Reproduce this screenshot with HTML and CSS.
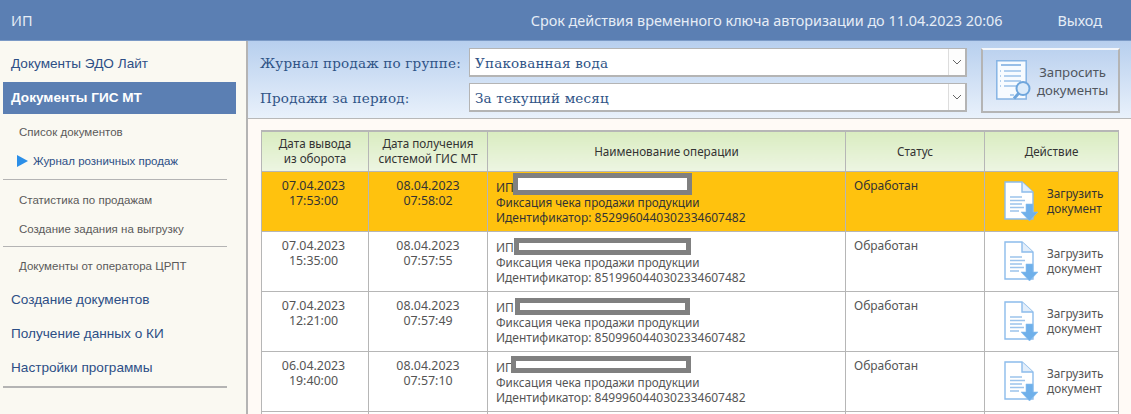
FILE: index.html
```html
<!DOCTYPE html>
<html lang="ru">
<head>
<meta charset="utf-8">
<title>Журнал розничных продаж</title>
<link rel="stylesheet" href="styles.css">
</head>
<body>
<svg class="defs" width="0" height="0" aria-hidden="true">
  <symbol id="doc-down" viewBox="0 0 34 40">
    <path d="M1 1H18L29 11V38H1Z" fill="#fff" stroke="#8cbcec" stroke-width="1.4"/>
    <path d="M18 1V11H29" fill="#e3eefa" stroke="#8cbcec" stroke-width="1.4"/>
    <path d="M6 16H18M6 19.500H21M6 23H18M6 26.500H20M6 30H15" stroke="#9cc4ec" stroke-width="1.3" fill="none"/>
    <path d="M22 23H29V31H34L25.500 40L17 31H22Z" fill="#6fb0ea" stroke="#8cc0f0" stroke-width=".6"/>
  </symbol>
</svg>
<header class="topbar">
  <span class="org">ИП</span>
  <span class="key">Срок действия временного ключа авторизации до 11.04.2023 20:06</span>
  <span class="exit">Выход</span>
</header>
<div class="body">
  <nav class="side">
    <a class="m first">Документы ЭДО Лайт</a>
    <a class="m active">Документы ГИС МТ</a>
    <a class="s s-list">Список документов</a>
    <a class="s current"><i class="arrow"></i>Журнал розничных продаж</a>
    <hr class="rule rule-a">
    <a class="s s-stat">Статистика по продажам</a>
    <a class="s s-task">Создание задания на выгрузку</a>
    <hr class="rule rule-b">
    <a class="s s-op">Документы от оператора ЦРПТ</a>
    <a class="m m-create">Создание документов</a>
    <a class="m m-get">Получение данных о КИ</a>
    <a class="m m-set">Настройки программы</a>
    <hr class="rule rule-c">
  </nav>
  <main class="main">
    <section class="filters">
      <div class="fields">
        <div class="field">
          <label class="lab">Журнал продаж по группе:</label>
          <div class="select"><span class="val">Упакованная вода</span><span class="drop"><svg width="10" height="6" viewBox="0 0 10 6"><path d="M1 1L5 5L9 1" fill="none" stroke="#666" stroke-width="1"/></svg></span></div>
        </div>
        <div class="field">
          <label class="lab">Продажи за период:</label>
          <div class="select"><span class="val">За текущий месяц</span><span class="drop"><svg width="10" height="6" viewBox="0 0 10 6"><path d="M1 1L5 5L9 1" fill="none" stroke="#666" stroke-width="1"/></svg></span></div>
        </div>
      </div>
      <button class="req">
        <svg class="req-ic" width="36" height="41" viewBox="0 0 36 41">
          <path d="M.8 .8H30.200V39H.8Z" fill="#f7fbff" stroke="#86b4e4" stroke-width="1.5"/>
          <path d="M5 5H25" stroke="#7fb0e2" stroke-width="1.600"/>
          <path d="M8 11H25M8 16H25M8 21H25M8 26H22M14 35H18" stroke="#9cc2ea" stroke-width="1.300"/>
          <path d="M4 11H5M4 16H5M4 21H5M4 26H5" stroke="#9cc2ea" stroke-width="1.300"/>
          <circle cx="27" cy="28.500" r="6.500" fill="#dcebfa" stroke="#6fa6dc" stroke-width="2"/>
          <path d="M22.500 33.500L18 38.500" stroke="#6fa6dc" stroke-width="3"/>
        </svg>
        <span class="req-t">Запросить<br>документы</span>
      </button>
    </section>
    <div class="content">
      <table class="tbl">
        <colgroup><col class="c1"><col class="c2"><col class="c3"><col class="c4"><col class="c5"></colgroup>
        <thead>
          <tr><th>Дата вывода<br>из оборота</th><th>Дата получения<br>системой ГИС МТ</th><th>Наименование операции</th><th>Статус</th><th>Действие</th></tr>
        </thead>
        <tbody>
          <tr class="sel">
            <td class="dt">07.04.2023<br>17:53:00</td><td class="dt">08.04.2023<br>07:58:02</td>
            <td class="op"><div class="ip">ИП<span class="red r1"></span></div><span class="fx">Фиксация чека продажи продукции</span><br>Идентификатор: 8529960440302334607482</td>
            <td class="st">Обработан</td>
            <td class="act"><div class="load"><svg class="dl" width="34" height="40"><use href="#doc-down"/></svg><span>Загрузить<br>документ</span></div></td>
          </tr>
          <tr>
            <td class="dt">07.04.2023<br>15:35:00</td><td class="dt">08.04.2023<br>07:57:55</td>
            <td class="op"><div class="ip">ИП<span class="red r2"></span></div><span class="fx">Фиксация чека продажи продукции</span><br>Идентификатор: 8519960440302334607482</td>
            <td class="st">Обработан</td>
            <td class="act"><div class="load"><svg class="dl" width="34" height="40"><use href="#doc-down"/></svg><span>Загрузить<br>документ</span></div></td>
          </tr>
          <tr>
            <td class="dt">07.04.2023<br>12:21:00</td><td class="dt">08.04.2023<br>07:57:49</td>
            <td class="op"><div class="ip">ИП<span class="red r3"></span></div><span class="fx">Фиксация чека продажи продукции</span><br>Идентификатор: 8509960440302334607482</td>
            <td class="st">Обработан</td>
            <td class="act"><div class="load"><svg class="dl" width="34" height="40"><use href="#doc-down"/></svg><span>Загрузить<br>документ</span></div></td>
          </tr>
          <tr>
            <td class="dt">06.04.2023<br>19:40:00</td><td class="dt">08.04.2023<br>07:57:10</td>
            <td class="op"><div class="ip">ИП<span class="red r4"></span></div><span class="fx">Фиксация чека продажи продукции</span><br>Идентификатор: 8499960440302334607482</td>
            <td class="st">Обработан</td>
            <td class="act"><div class="load"><svg class="dl" width="34" height="40"><use href="#doc-down"/></svg><span>Загрузить<br>документ</span></div></td>
          </tr>
          <tr class="tail"><td></td><td></td><td></td><td></td><td></td></tr>
        </tbody>
      </table>
    </div>
  </main>
</div>
</body>
</html>
```

FILE: styles.css
```css
* { box-sizing: border-box; }
html, body { margin: 0; height: 414px; overflow: hidden; }
body { font-family: "Noto Sans", sans-serif; background: #fffaf6; color: #444; }
.defs { position: absolute; }

.topbar {
  height: 41px; display: flex; align-items: center;
  background: #5b7fb3; color: #e6edf6;
  font-size: 14.400px;
  padding: 0 29px 0 11px;
  border-bottom: 1px solid #7b9ac6;
}
.key { margin-left: auto; }
.exit { margin-left: 55px; }

.body { display: flex; height: 373px; }

.side {
  width: 248px; flex: none; height: 100%;
  background: #faf9f2; border-right: 2px solid #b4b4b4;
  padding: 0 0 0 3px;
  display: flex; flex-direction: column;
  font-family: "Liberation Sans", sans-serif;
}
.side a { display: block; }
.m { font-size: 13.600px; color: #2d4f86; padding-left: 8px; height: 20px; line-height: 20px; }
.first { margin-top: 13px; }
.active {
  margin-top: 8px; height: 32px; width: 233px; line-height: 32px;
  background: #5b7fb3; color: #fff; font-weight: bold;
}
.s { font-size: 11.500px; color: #5a5a5a; padding-left: 16px; height: 16px; line-height: 16px; }
.s-list { margin-top: 10px; }
.current { margin-top: 13px; color: #2d4f86; display: flex !important; align-items: center; padding-left: 14px; }
.arrow {
  width: 0; height: 0; margin-right: 5px;
  border-left: 11px solid #2b8fe8; border-top: 6px solid transparent; border-bottom: 6px solid transparent;
}
.rule { border: 0; height: 1px; width: 224px; margin: 0; background: #b4b4b4; }
.rule-a { margin-top: 10px; }
.s-stat { margin-top: 12px; }
.s-task { margin-top: 13px; }
.rule-b { margin-top: 9px; }
.s-op { margin-top: 11px; }
.m-create { margin-top: 16px; }
.m-get { margin-top: 14px; }
.m-set { margin-top: 14px; }
.rule-c { margin-top: 8px; height: 2px; }

.main { flex: 1; display: flex; flex-direction: column; min-width: 0; }

.filters {
  height: 78px; flex: none; display: flex;
  padding: 7px 0 0 12px;
  background: linear-gradient(#b7cfee, #e9f1fb);
  border-bottom: 1px solid #b8b8b8;
}
.fields { display: flex; flex-direction: column; gap: 6px; width: 707px; }
.field { display: flex; align-items: center; height: 29px; }
.lab {
  width: 209px; flex: none; font-family: "DejaVu Serif", serif; font-size: 13.500px; color: #2f5386;
  white-space: nowrap; letter-spacing: .2px;
}
.select {
  flex: 1; height: 29px; display: flex; background: #fff;
  border: 2px solid #b4b4b4; border-width: 1px 2px 2px 1px;
}
.val { flex: 1; padding-left: 5px; line-height: 29px; font-family: "DejaVu Serif", serif; font-size: 13.500px; color: #2f5386; letter-spacing: .2px; }
.drop { width: 17px; display: flex; align-items: center; justify-content: center; background: #fdfdfd; border-left: 1px solid #ddd; }

.req {
  margin-left: 14px; width: 139px; height: 65px; padding: 0 0 0 13px;
  display: flex; align-items: center; gap: 5px; cursor: pointer;
  background: linear-gradient(#bcd2ef, #e4edf9);
  border: 2px solid; border-color: #f4f7fb #b4b4b4 #b4b4b4 #b4b4b4;
  font-family: "Noto Sans", sans-serif; font-size: 13.200px; color: #50565e; line-height: 18px;
}
.req-ic { flex: none; }
.req-t { text-align: center; white-space: nowrap; }

.content { flex: 1; padding: 11px 0 0 13px; overflow: hidden; }
.tbl {
  border-collapse: collapse; table-layout: fixed; width: 857px; background: #fff;
  font-size: 12.400px; line-height: 15px; color: #555;
}
.c1 { width: 107px; } .c2 { width: 119px; } .c3 { width: 358px; } .c4 { width: 139px; } .c5 { width: 134px; }
.tbl th, .tbl td { border: 1px solid #b6b6b6; }
.tbl thead th {
  height: 40px; padding: 0; font-weight: normal; color: #333; text-align: center;
  font-size: 11.700px;
  background: linear-gradient(#d9ecc0, #edf5e2);
  border-top-width: 2px;
}
.tbl tbody tr { height: 60px; }
.tbl td { vertical-align: top; padding: 6px 8px 0; }
.tbl .dt { text-align: center; padding-left: 0; padding-right: 0; }
.tbl .dt:first-child { padding-right: 3px; }
.sel td { background: #ffc20e; color: #333; }
.tail td { height: 10px; }
.tbl .op { white-space: nowrap; padding-top: 8px; font-size: 12px; }
.fx { font-size: 11.700px; }
.ip { position: relative; }
.red { position: absolute; background: #fff; border: 5px solid #808080; }
.r1 { left: 17px; top: -7px; width: 179px; height: 22px; }
.r2 { left: 18px; top: -2px; width: 177px; height: 17px; }
.r3 { left: 19px; top: -2px; width: 175px; height: 17px; }
.r4 { left: 15px; top: -4px; width: 180px; height: 17px; }
.tbl .st { font-size: 12px; }
.tbl .act { padding: 0 0 0 19px; vertical-align: middle; }
.load { display: flex; align-items: center; gap: 9px; white-space: nowrap; font-size: 11.800px; }
.load .dl { flex: none; }
```
